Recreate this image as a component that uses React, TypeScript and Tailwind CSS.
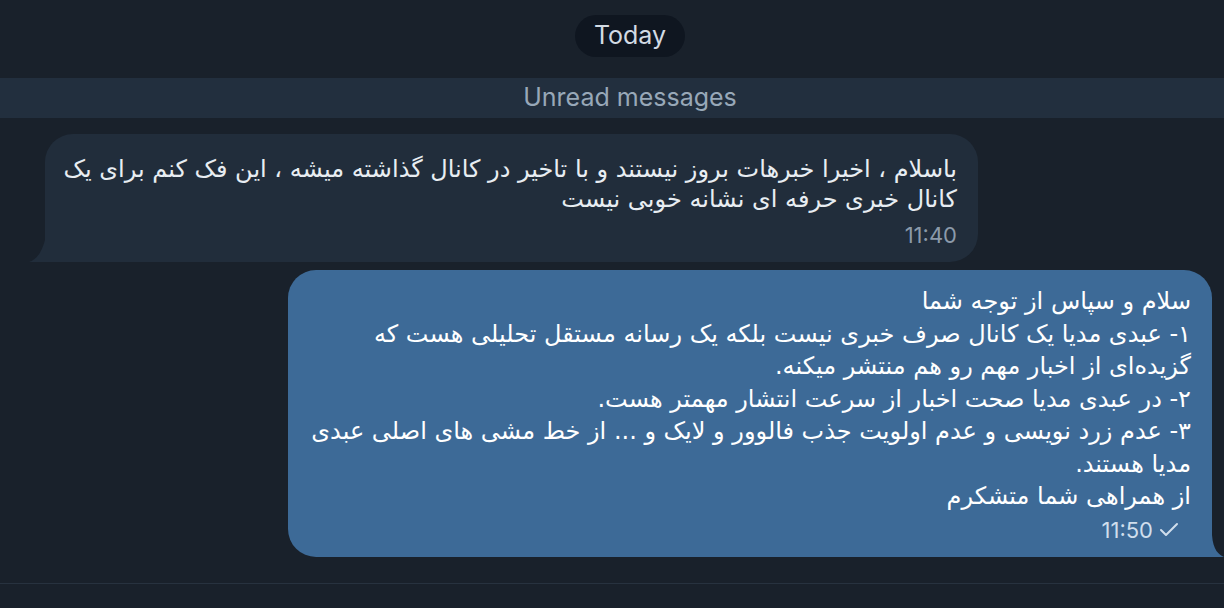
import { Check } from 'lucide-react';

const incoming = [
  'باسلام ، اخیرا خبرهات بروز نیستند و با تاخیر در کانال گذاشته میشه ، این فک کنم برای یک',
  'کانال خبری حرفه ای نشانه خوبی نیست',
];

const outgoing = [
  'سلام و سپاس از توجه شما',
  '۱- عبدی مدیا یک کانال صرف خبری نیست بلکه یک رسانه مستقل تحلیلی هست که',
  'گزیده‌ای از اخبار مهم رو هم منتشر میکنه.',
  '۲- در عبدی مدیا صحت اخبار از سرعت انتشار مهمتر هست.',
  '۳- عدم زرد نویسی و عدم اولویت جذب فالوور و لایک و ... از خط مشی های اصلی عبدی',
  'مدیا هستند.',
  'از همراهی شما متشکرم',
];

const fa = "font-['DejaVu_Sans',sans-serif]";
const latin = "font-['Inter','Liberation_Sans',sans-serif]";

function App() {
  return (
    <div className="h-[608px] w-[1224px] overflow-hidden bg-[#19212b] flex flex-col">
      {/* date pill */}
      <div className="flex justify-center pt-[15px] pl-[36px]">
        <div className={`${latin} h-[42px] px-[19px] rounded-full bg-[#0f1620] text-[#d3dbe4] text-[25px] flex items-center`}>
          Today
        </div>
      </div>

      {/* unread separator */}
      <div className={`${latin} mt-[21px] h-[40px] pl-[36px] bg-[#222f3e] flex items-center justify-center text-[25px] text-[#98a8b8]`}>
        Unread messages
      </div>

      {/* incoming */}
      <div className="mt-[16px] pl-[45px]">
        <div className="relative w-[933px] rounded-[28px] rounded-bl-none bg-[#212d3b] pt-[20px] pb-[14px] pr-[21px] pl-[20px]">
          <div dir="rtl" className={`${fa} text-[24px] leading-[30px] text-[#e8edf2] whitespace-nowrap`}>
            {incoming.map((l) => (
              <div key={l}>{l}</div>
            ))}
          </div>
          <div className={`${latin} mt-[8px] text-right text-[22px] leading-[26px] text-[#8b9aaa]`}>11:40</div>
          <svg className="absolute bottom-0 left-[-16px]" width="17" height="22" viewBox="0 0 17 22">
            <path d="M17 0 L17 22 L0 22 C6 20 12 15 16 0 Z" fill="#212d3b" />
          </svg>
        </div>
      </div>

      {/* outgoing */}
      <div className="mt-[8px] flex justify-end pr-[12px]">
        <div className="relative w-[924px] rounded-[28px] rounded-br-none bg-[#3d6a97] pt-[15px] pb-[14px] pr-[21px] pl-[20px]">
          <div dir="rtl" className={`${fa} text-[24px] leading-[32.5px] text-white whitespace-nowrap`}>
            {outgoing.map((l) => (
              <div key={l}>{l}</div>
            ))}
          </div>
          <div className={`${latin} mt-[4px] flex items-center justify-end gap-[4px] pr-[10px] text-[22px] leading-[26px] text-[#d0deec]`}>
            <span>11:50</span>
            <Check size={24} strokeWidth={2} />
          </div>
          <svg className="absolute bottom-0 right-[-12px]" width="13" height="22" viewBox="0 0 13 22">
            <path d="M0 0 L0 22 L13 22 C8 20 2 15 1 0 Z" fill="#3d6a97" />
          </svg>
        </div>
      </div>

      {/* composer divider */}
      <div className="mt-auto mb-[24px] h-px bg-[#27323f]" />
    </div>
  );
}

export default App;
